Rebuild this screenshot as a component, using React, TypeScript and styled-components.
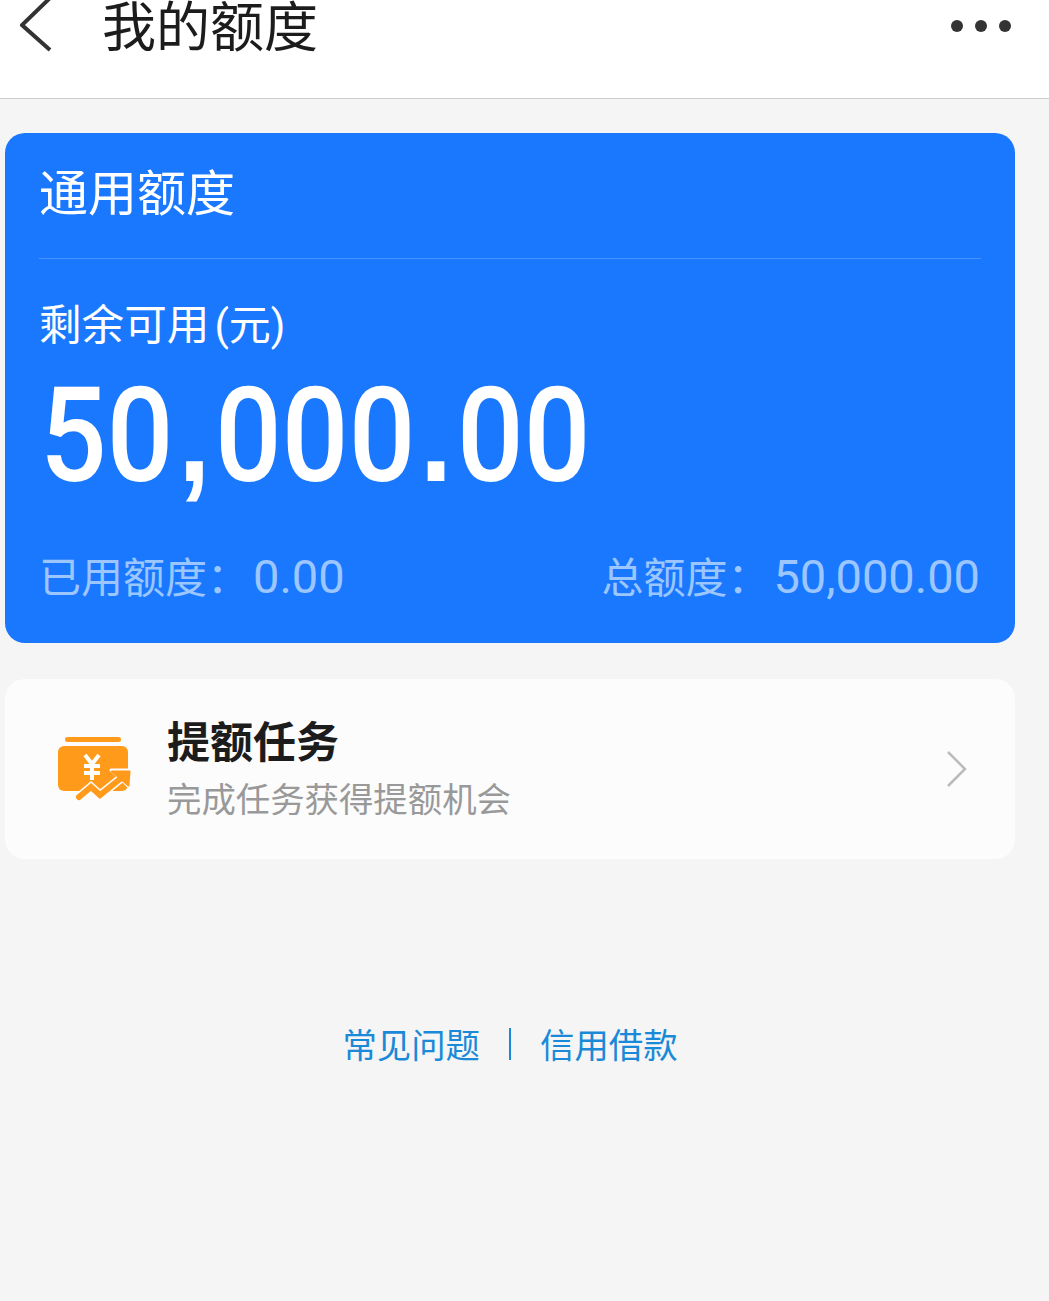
import React from 'react';
import styled, { createGlobalStyle } from 'styled-components';

const cjk = `"Noto Sans CJK SC", "Noto Sans", sans-serif`;
const latin = `Roboto, "Noto Sans CJK SC", sans-serif`;

const GlobalStyle = createGlobalStyle`
  html, body {
    margin: 0;
    padding: 0;
    background: #f5f5f5;
  }
  body {
    font-family: ${cjk};
    overflow: hidden;
  }
`;

const Page = styled.div`
  width: 1049px;
  height: 1301px;
  overflow: hidden;
  background: #f5f5f5;
`;

const Header = styled.header`
  height: 98px;
  background: #fff;
  border-bottom: 1px solid #cccccc;
  display: flex;
  align-items: flex-start;
  padding: 0 38px 0 20px;
  overflow: hidden;
`;

const BackIcon = styled.svg`
  width: 32px;
  height: 54px;
  flex: none;
`;

const Title = styled.h1`
  margin: -15px 0 0 50px;
  font-size: 54px;
  line-height: 78px;
  font-weight: 400;
  color: #1c1c1c;
  flex: 1;
`;

const Dots = styled.div`
  display: flex;
  gap: 12px;
  margin-top: 20px;
`;

const Dot = styled.span`
  width: 12px;
  height: 12px;
  border-radius: 50%;
  background: #333;
`;

const Content = styled.main`
  width: 1010px;
  margin: 34px 0 0 5px;
`;

const QuotaCard = styled.section`
  height: 510px;
  background: #1a78ff;
  border-radius: 20px;
  padding: 0 34px;
  box-sizing: border-box;
  color: #fff;
`;

const CardTitle = styled.h2`
  margin: 0;
  height: 126px;
  display: flex;
  align-items: center;
  padding: 0 0 12px;
  box-sizing: border-box;
  font-size: 49px;
  font-weight: 400;
  line-height: 1;
  border-bottom: 1px solid #4a94ff;
`;

const Label = styled.div`
  margin: 37px 0 0;
  font-size: 42.6px;
  line-height: 52px;
  white-space: nowrap;
`;

const Paren = styled.span`
  font-family: ${latin};
  font-size: 42px;
  margin-left: 5px;
`;

const Amount = styled.div`
  font-family: ${latin};
  font-weight: 500;
  font-size: 132px;
  line-height: 132px;
  margin: 18px 0 0 1px;
  transform: scaleX(0.89);
  transform-origin: left center;
  white-space: nowrap;
`;

const AmountMark = styled.span`
  font-family: "Liberation Sans", sans-serif;
  font-weight: 700;
  margin: 0 5px;
`;

const Stats = styled.div`
  display: flex;
  justify-content: space-between;
  margin-top: 49px;
  font-size: 42px;
  line-height: 52px;
  color: #9cc6ff;
  padding: 0 1px 0 0;
`;

const Stat = styled.div`
  display: flex;
  align-items: center;
  white-space: nowrap;
`;

const StatLabel = styled.span`
  margin-top: -4px;
`;

const StatValue = styled.span`
  font-family: ${latin};
  font-size: 47px;
  margin-left: 4px;
`;

const TaskCard = styled.section`
  height: 180px;
  margin-top: 36px;
  background: #fcfcfc;
  border-radius: 20px;
  display: flex;
  align-items: center;
  padding: 0 47px 0 53px;
  box-sizing: border-box;
`;

const TaskIcon = styled.svg`
  width: 74px;
  height: 64px;
  flex: none;
`;

const TaskText = styled.div`
  flex: 1;
  margin-left: 35px;
`;

const TaskTitle = styled.div`
  font-size: 43px;
  line-height: 54px;
  margin-top: -6px;
  font-weight: 700;
  color: #1c1c1c;
`;

const TaskDesc = styled.div`
  font-size: 34.4px;
  line-height: 46px;
  margin-top: 8px;
  color: #999;
`;

const Chevron = styled.svg`
  width: 22px;
  height: 38px;
  flex: none;
`;

const FooterLinks = styled.nav`
  display: flex;
  justify-content: center;
  align-items: center;
  margin-top: 162px;
  font-size: 34.4px;
  line-height: 44px;
  color: #1a8ad8;
`;

const Divider = styled.span`
  width: 2px;
  height: 32px;
  background: #1a8ad8;
  margin: 2px 29px 0;
`;

export default function App() {
  return (
    <>
      <GlobalStyle />
      <Page>
        <Header>
          <BackIcon viewBox="0 0 32 54">
            <path d="M30 -2 L2 25 L30 50" fill="none" stroke="#333" strokeWidth="4" />
          </BackIcon>
          <Title>我的额度</Title>
          <Dots>
            <Dot />
            <Dot />
            <Dot />
          </Dots>
        </Header>
        <Content>
          <QuotaCard>
            <CardTitle>通用额度</CardTitle>
            <Label>
              剩余可用<Paren>(元)</Paren>
            </Label>
            <Amount>
              50<AmountMark>,</AmountMark>000<AmountMark>.</AmountMark>00
            </Amount>
            <Stats>
              <Stat>
                <StatLabel>已用额度：</StatLabel>
                <StatValue>0.00</StatValue>
              </Stat>
              <Stat>
                <StatLabel>总额度：</StatLabel>
                <StatValue>50,000.00</StatValue>
              </Stat>
            </Stats>
          </QuotaCard>
          <TaskCard>
            <TaskIcon viewBox="0 0 74 64">
              <rect x="7" y="0" width="56" height="5" rx="2.5" fill="#ff9a1a" />
              <rect x="0" y="9" width="70" height="45" rx="6" fill="#ff9a1a" />
              <path d="M27 18l7 9 7-9M34 27v16M26 29h16M26 36h16" fill="none" stroke="#fff" strokeWidth="4" />
              <path d="M21 60l12-10 9 8 20-16" fill="none" stroke="#fcfcfc" strokeWidth="9" strokeLinecap="round" />
              <path d="M53 33h20l-1 18z" fill="#ff9a1a" stroke="#fcfcfc" strokeWidth="3" strokeLinejoin="round" />
              <path d="M54 34.5h17.5l-1 14z" fill="#ff9a1a" stroke="#ff9a1a" strokeWidth="2" strokeLinejoin="round" />
              <path d="M21 60l12-10 9 8 20-16" fill="none" stroke="#ff9a1a" strokeWidth="6" strokeLinecap="round" />
            </TaskIcon>
            <TaskText>
              <TaskTitle>提额任务</TaskTitle>
              <TaskDesc>完成任务获得提额机会</TaskDesc>
            </TaskText>
            <Chevron viewBox="0 0 22 38">
              <path d="M2 2l17 17L2 36" fill="none" stroke="#bbb" strokeWidth="2.5" />
            </Chevron>
          </TaskCard>
          <FooterLinks>
            <span>常见问题</span>
            <Divider />
            <span>信用借款</span>
          </FooterLinks>
        </Content>
      </Page>
    </>
  );
}
